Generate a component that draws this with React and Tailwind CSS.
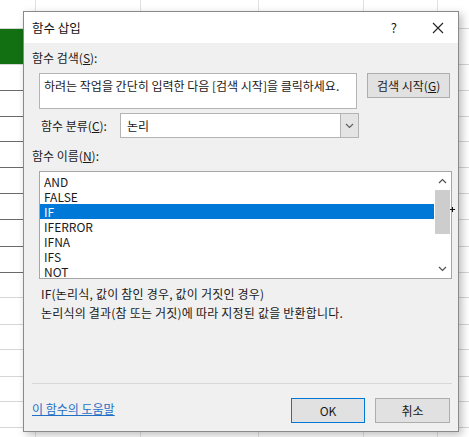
import React from "react";

const font = { fontFamily: '"Noto Sans CJK KR", "Noto Sans", sans-serif' };

const rows = [
  { h: 29, left: "", line: "border-[#d4d4d4]", leftLine: "border-transparent" },
  { h: 36, left: "bg-[#127012]", line: "border-[#d4d4d4]", leftLine: "border-[#5a5a5a]" },
  { h: 26, dark: true },
  { h: 26, dark: true },
  { h: 25, dark: true },
  { h: 26, dark: true },
  { h: 26, dark: true },
  { h: 26, dark: true },
  { h: 27, dark: true },
  { h: 26, dark: true },
  { h: 25 },
  { h: 27 },
  { h: 25 },
  { h: 27 },
  { h: 25 },
  { h: 26 },
  { h: 20 },
];

const cols = [35, 105, 118, 105, 74, 32];

const functions = ["AND", "FALSE", "IF", "IFERROR", "IFNA", "IFS", "NOT"];

function Sheet() {
  return (
    <div className="flex flex-col w-[469px] bg-white">
      {rows.map((r, i) => (
        <div key={i} className="flex" style={{ height: r.h }}>
          {cols.map((w, j) => (
            <div
              key={j}
              className={`border-b ${j > 0 ? "border-l border-l-[#e2e2e2]" : ""} ${
                j === 0 && r.dark ? "border-b-[#6a6a6a]" : "border-b-[#d6d6d6]"
              } ${j === 0 && r.left ? r.left : ""}`}
              style={{ width: w }}
            />
          ))}
        </div>
      ))}
    </div>
  );
}

function Chevron({ up, className }) {
  return (
    <svg width="9" height="6" viewBox="0 0 9 6" className={className}>
      <path
        d={up ? "M1 5 L4.5 1.5 L8 5" : "M1 1 L4.5 4.5 L8 1"}
        fill="none"
        stroke="currentColor"
        strokeWidth="1.2"
      />
    </svg>
  );
}

export default function App() {
  return (
    <div className="relative w-[469px] h-[437px] overflow-hidden bg-white" style={font}>
      <Sheet />

      <div className="absolute left-[23px] top-[11px] w-[436px] h-[421px] border border-[#8a8a8a] bg-[#f0f0f0] shadow-[3px_3px_8px_rgba(0,0,0,0.25)] flex flex-col text-[12px] leading-[16px] text-[#1a1a1a]">
        {/* title bar */}
        <div className="h-[31px] bg-white flex items-center pl-[8px] pr-[14px] shrink-0">
          <span className="text-[12.5px] text-[#111]">함수 삽입</span>
          <span className="ml-auto mr-[35px] text-[13px]">?</span>
          <svg width="12" height="12" viewBox="0 0 12 12">
            <path d="M1 1 L11 11 M11 1 L1 11" stroke="#222" strokeWidth="1.1" />
          </svg>
        </div>

        <div className="flex flex-col px-[8px]">
          <div className="mt-[7px] h-[16px]">
            함수 검색(<span className="underline">S</span>):
          </div>

          <div className="mt-[7px] flex items-start pl-[7px]">
            <div className="w-[319px] h-[36px] bg-white border border-[#b4b4b4] pl-[4px] pt-[4px] whitespace-nowrap">
              하려는 작업을 간단히 입력한 다음 [검색 시작]을 클릭하세요.
            </div>
            <button className="ml-[10px] w-[83px] h-[25px] bg-[#e1e1e1] border border-[#adadad] flex items-center justify-center">
              검색 시작(<span className="underline">G</span>)
            </button>
          </div>

          <div className="mt-[4px] flex items-center pl-[9px]">
            <span className="w-[79px]">
              함수 분류(<span className="underline">C</span>):
            </span>
            <div className="w-[239px] h-[25px] bg-white border border-[#b4b4b4] flex items-center">
              <span className="pl-[6px]">논리</span>
              <div className="ml-auto w-[18px] h-[23px] bg-[#e4e4e4] border-l border-[#b4b4b4] flex items-center justify-center text-[#606060]">
                <Chevron />
              </div>
            </div>
          </div>

          <div className="mt-[10px] h-[16px]">
            함수 이름(<span className="underline">N</span>):
          </div>

          <div className="relative mt-[7px] ml-[7px] w-[413px] h-[108px] bg-white border border-[#a6a6a6] flex">
            <div className="flex-1 pt-[2px]">
              {functions.map((f) => (
                <div
                  key={f}
                  className={`h-[15px] leading-[15px] pl-[4px] ${
                    f === "IF" ? "bg-[#0078d7] text-white" : ""
                  }`}
                >
                  {f}
                </div>
              ))}
            </div>
            <div className="w-[17px] flex flex-col items-center text-[#505050]">
              <div className="h-[18px] flex items-center justify-center">
                <Chevron up />
              </div>
              <div className="w-[15px] h-[44px] bg-[#cdcdcd]" />
              <div className="mt-auto h-[18px] flex items-center justify-center">
                <Chevron />
              </div>
            </div>
            {/* mouse cursor crosshair */}
            <svg width="5" height="5" viewBox="0 0 5 5" className="absolute right-[-4px] top-[35px]">
              <path d="M2.5 0 V5 M0 2.5 H5" stroke="#111" strokeWidth="1" />
            </svg>
          </div>

          <div className="mt-[5px] pl-[9px] leading-[19px] tracking-[0.2px]">
            <div>IF(논리식, 값이 참인 경우, 값이 거짓인 경우)</div>
            <div>논리식의 결과(참 또는 거짓)에 따라 지정된 값을 반환합니다.</div>
          </div>

          <div className="mt-[61px] h-px bg-[#d8d8d8] w-[420px]" />

          <div className="mt-[14px] flex items-center h-[25px]">
            <a className="text-[#1f6fc5] underline -mt-[3px]">이 함수의 도움말</a>
            <button className="ml-auto w-[74px] h-[25px] bg-[#e1e1e1] border border-[#0078d7]">
              OK
            </button>
            <button className="ml-[10px] w-[75px] h-[25px] bg-[#e1e1e1] border border-[#adadad]">
              취소
            </button>
          </div>
        </div>
      </div>
    </div>
  );
}
